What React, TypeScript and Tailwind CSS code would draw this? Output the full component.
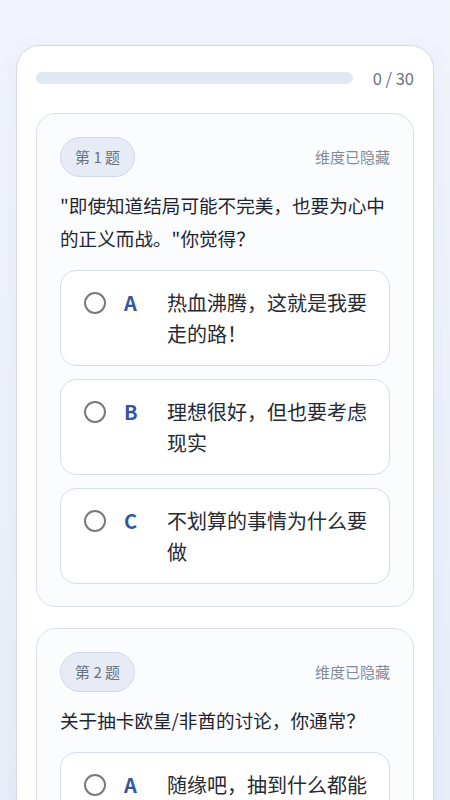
import React from "react";

type Option = { key: string; text: string };
type Question = { no: number; text: string; options: Option[] };

const questions: Question[] = [
  {
    no: 1,
    text: "\"即使知道结局可能不完美，也要为心中的正义而战。\"你觉得？",
    options: [
      { key: "A", text: "热血沸腾，这就是我要走的路！" },
      { key: "B", text: "理想很好，但也要考虑现实" },
      { key: "C", text: "不划算的事情为什么要做" },
    ],
  },
  {
    no: 2,
    text: "关于抽卡欧皇/非酋的讨论，你通常？",
    options: [
      { key: "A", text: "随缘吧，抽到什么都能接受" },
      { key: "B", text: "会认真研究概率和保底" },
      { key: "C", text: "不抽卡，不参与" },
    ],
  },
];

function OptionRow({ option }: { option: Option }) {
  return (
    <button className="flex w-full items-start gap-[18px] rounded-2xl border border-[#d6deeb] bg-white py-[16px] pl-[23px] pr-[20px] text-left">
      <span className="mt-[5px] h-[22px] w-[22px] shrink-0 rounded-full border-2 border-[#7a7a7a]" />
      <span className="w-[25px] shrink-0 text-[20px] font-bold leading-[31px] text-[#37569c]">
        {option.key}
      </span>
      <span className="text-[20px] leading-[31px] text-[#262a33]">{option.text}</span>
    </button>
  );
}

function QuestionCard({ q }: { q: Question }) {
  return (
    <div className="rounded-[20px] border border-[#d9e0ec] bg-[#fbfcfe] px-[23px] pt-[23px] pb-[22px]">
      <div className="flex items-center justify-between">
        <span className="flex h-[40px] items-center rounded-full border border-[#d0d9e8] bg-[#e6ebf5] px-[14px] text-[15px] text-[#6b7280]">
          第 {q.no} 题
        </span>
        <span className="text-[15px] text-[#858b96]">维度已隐藏</span>
      </div>
      <p className="mt-[11px] text-[18.6px] leading-[33px] text-[#1f2530]">{q.text}</p>
      <div className="mt-[16px] flex flex-col gap-[13px]">
        {q.options.map((o) => (
          <OptionRow key={o.key} option={o} />
        ))}
      </div>
    </div>
  );
}

export default function App() {
  return (
    <div
      className="min-h-screen bg-gradient-to-b from-[#f1f4fb] to-[#e6ebf6] px-4 pt-[45px]"
      style={{ fontFamily: '"Noto Sans CJK SC", "Noto Sans", sans-serif' }}
    >
      <div className="rounded-3xl border border-[#d3dbe8] bg-white px-[19px] pt-[26px] pb-6 shadow-[0_4px_20px_rgba(120,140,180,0.08)]">
        <div className="flex h-3 items-center gap-5">
          <div className="h-3 flex-1 rounded-full bg-[#e2e8f2]" />
          <span className="text-[16.5px] leading-3 text-[#6b7280]">0 / 30</span>
        </div>
        <div className="mt-[29px] flex flex-col gap-[21px]">
          {questions.map((q) => (
            <QuestionCard key={q.no} q={q} />
          ))}
        </div>
      </div>
    </div>
  );
}
